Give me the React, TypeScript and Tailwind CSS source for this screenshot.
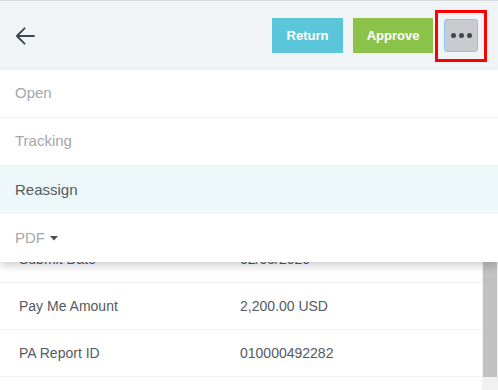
import React from "react";

const rows = [
  { label: "Report Name", value: "Travel Expense" },
  { label: "Employee", value: "John Smith" },
  { label: "Status", value: "Pending" },
  { label: "Submit Date", value: "02/05/2020" },
  { label: "Pay Me Amount", value: "2,200.00 USD" },
  { label: "PA Report ID", value: "010000492282" },
];

const menu = [
  { label: "Open", active: false },
  { label: "Tracking", active: false },
  { label: "Reassign", active: true },
];

export default function App() {
  return (
    <div
      className="relative w-[498px] h-[390px] overflow-hidden bg-white"
      style={{ fontFamily: '"Liberation Sans", Arial, sans-serif' }}
    >
      {/* Header */}
      <div className="h-[70px] border-t border-[#dcdfe2] bg-[#f1f4f7] flex items-center pl-[15px] pr-[11px]">
        <button className="w-[20px] h-[20px] flex items-center justify-center text-[#3d4852]">
          <svg width="21" height="20" viewBox="0 0 21 20" fill="none">
            <path d="M20 10H2M10 2L2 10l8 8" stroke="currentColor" strokeWidth="2" strokeLinecap="round" strokeLinejoin="round" />
          </svg>
        </button>
        <div className="ml-auto flex items-center">
          <button className="w-[71px] h-[35px] bg-[#5bc6d9] text-white text-[13px] font-bold">Return</button>
          <button className="ml-[10px] w-[80px] h-[35px] bg-[#8bc34a] text-white text-[13px] font-bold">Approve</button>
          <div className="ml-[2px] w-[52px] h-[52px] border-[3px] border-[#ff0000] flex items-center justify-center">
            <div className="w-[34px] h-[33px] rounded-[3px] bg-[#c9cbce] border border-[#8fc3ee] flex items-center justify-center gap-[3px]">
              <span className="w-[5px] h-[5px] rounded-full bg-[#41474d]" />
              <span className="w-[5px] h-[5px] rounded-full bg-[#41474d]" />
              <span className="w-[5px] h-[5px] rounded-full bg-[#41474d]" />
            </div>
          </div>
        </div>
      </div>

      {/* Content */}
      <div className="flex h-[320px]">
        <div className="flex-1 pt-[25px] text-[14px] text-[#555a5f]">
          {rows.map((r) => (
            <div key={r.label} className="h-[47px] flex items-center border-b border-[#eef1f4]">
              <span className="pl-[19px] w-[240px]">{r.label}</span>
              <span>{r.value}</span>
            </div>
          ))}
        </div>
        <div className="w-[16px] bg-[#f1f1f1] pl-[1px] pr-[1px] pt-[60px]">
          <div className="h-[247px] bg-[#c1c1c1]" />
        </div>
      </div>

      {/* Dropdown menu */}
      <div className="absolute left-0 right-0 top-[70px] bg-white shadow-[0_4px_8px_rgba(0,0,0,0.18)] text-[15px]">
        {menu.map((m) => (
          <div
            key={m.label}
            className={
              m.active
                ? "h-[48px] flex items-center pl-[15px] bg-[#eef7fa] text-[#545a60]"
                : "h-[48px] flex items-center pl-[15px] border-b border-[#f2f3f4] text-[#a3a7ab]"
            }
          >
            {m.label}
          </div>
        ))}
        <div className="h-[48px] flex items-center pl-[15px] text-[#a3a7ab]">
          PDF
          <svg className="ml-[5px]" width="8" height="5" viewBox="0 0 8 5">
            <path d="M0 0h8L4 4.5z" fill="#4a5056" />
          </svg>
        </div>
      </div>
    </div>
  );
}
